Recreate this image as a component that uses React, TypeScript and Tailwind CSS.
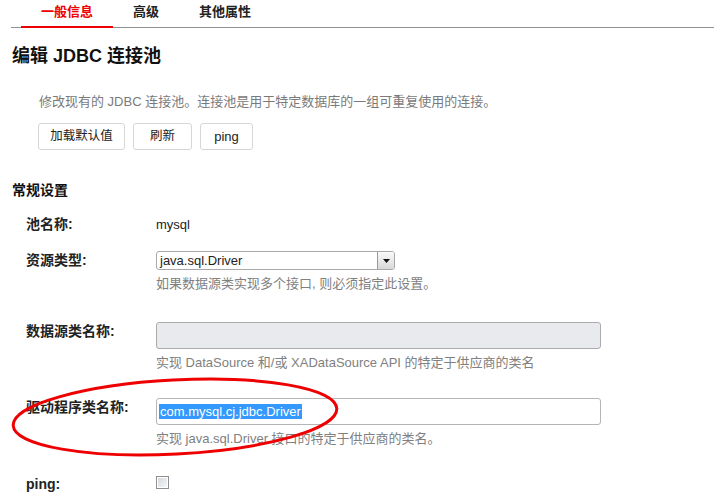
import React from 'react';

const font = { fontFamily: '"Liberation Sans", "Noto Sans CJK SC", sans-serif' };

const Row = ({ label, children, className = '' }: { label: string; children: React.ReactNode; className?: string }) => (
  <div className={`flex pl-[26px] ${className}`}>
    <div className="w-[130px] shrink-0 text-[14px] font-bold text-[#222] leading-[19px]">{label}</div>
    <div className="flex-1">{children}</div>
  </div>
);

const Help = ({ children }: { children: React.ReactNode }) => (
  <div className="mt-[6px] text-[13px] leading-[16px] text-[#808080]">{children}</div>
);

export default function App() {
  return (
    <div className="relative w-[714px] h-[496px] overflow-hidden bg-white text-[#222]" style={font}>
      {/* tabs */}
      <div className="ml-[11px] flex h-[28px] border-b border-[#8d9095] pl-[10px]">
        <div className="h-[28px] -mb-px border-b-2 border-[#ee0000] px-[20px] pt-[4px] text-[13px] font-bold leading-[16px] text-[#ee0000]">
          一般信息
        </div>
        <div className="px-[20px] pt-[4px] text-[13px] font-bold leading-[16px]">高级</div>
        <div className="px-[20px] pt-[4px] text-[13px] font-bold leading-[16px]">其他属性</div>
      </div>

      <h1 className="ml-[12px] mt-[16px] text-[18px] font-bold leading-[24px] text-[#111]">编辑 JDBC 连接池</h1>

      <p className="ml-[39px] mt-[26px] text-[13px] leading-[16px] text-[#7a7a7a]">
        修改现有的 JDBC 连接池。连接池是用于特定数据库的一组可重复使用的连接。
      </p>

      <div className="ml-[38px] mt-[13px] flex gap-[8px]">
        <button className="h-[27px] w-[87px] rounded-[3px] border border-[#d6d6d6] bg-white text-[12.5px] text-[#222]">加载默认值</button>
        <button className="h-[27px] w-[59px] rounded-[3px] border border-[#d6d6d6] bg-white text-[12.5px] text-[#222]">刷新</button>
        <button className="h-[27px] w-[53px] rounded-[3px] border border-[#d6d6d6] bg-white text-[13px] text-[#222]">ping</button>
      </div>

      <div className="ml-[12px] mt-[31px] text-[14px] font-bold leading-[18px] text-[#111]">常规设置</div>

      <Row label="池名称:" className="mt-[16px]">
        <div className="text-[13px] leading-[19px]">mysql</div>
      </Row>

      <Row label="资源类型:" className="mt-[17px]">
        <div className="flex h-[19px] w-[239px] items-center justify-between rounded-[3px] border border-[#a9a9a9] bg-white pl-[3px]">
          <span className="text-[13px] leading-[16px]">java.sql.Driver</span>
          <span className="flex h-[17px] w-[17px] items-center justify-center rounded-r-[2px] border-l border-[#9a9a9a] bg-gradient-to-b from-[#fafafa] to-[#d8d8d8]">
            <svg width="7" height="4" viewBox="0 0 7 4"><path d="M0 0h7L3.5 4z" fill="#111" /></svg>
          </span>
        </div>
        <Help>如果数据源类实现多个接口, 则必须指定此设置。</Help>
      </Row>

      <Row label="数据源类名称:" className="mt-[30px]">
        <div className="h-[27px] w-[445px] rounded-[3px] border border-[#ababab] bg-[#e8eaed]" />
        <Help>实现 DataSource 和/或 XADataSource API 的特定于供应商的类名</Help>
      </Row>

      <Row label="驱动程序类名称:" className="mt-[27px]">
        <div className="flex h-[27px] w-[445px] items-center rounded-[3px] border border-[#b5b5b5] bg-white pl-[2px]">
          <span className="bg-[#3399ff] px-px text-[13px] leading-[15px] text-white">com.mysql.cj.jdbc.Driver</span>
        </div>
        <Help>实现 java.sql.Driver 接口的特定于供应商的类名。</Help>
      </Row>

      <Row label="ping:" className="mt-[28px]">
        <div className="mt-[1px] h-[13px] w-[13px] border border-[#8f8f8f] bg-white p-px">
          <div className="h-full w-full bg-gradient-to-br from-[#d4d8de] to-[#f6f7f9]" />
        </div>
      </Row>

      {/* red annotation ellipse */}
      <svg className="pointer-events-none absolute left-0 top-[370px]" width="350" height="95" viewBox="0 0 350 95">
        <ellipse cx="175" cy="47" rx="162" ry="37" transform="rotate(-3 175 47)" fill="none" stroke="#ee0000" strokeWidth="3" />
      </svg>
    </div>
  );
}
